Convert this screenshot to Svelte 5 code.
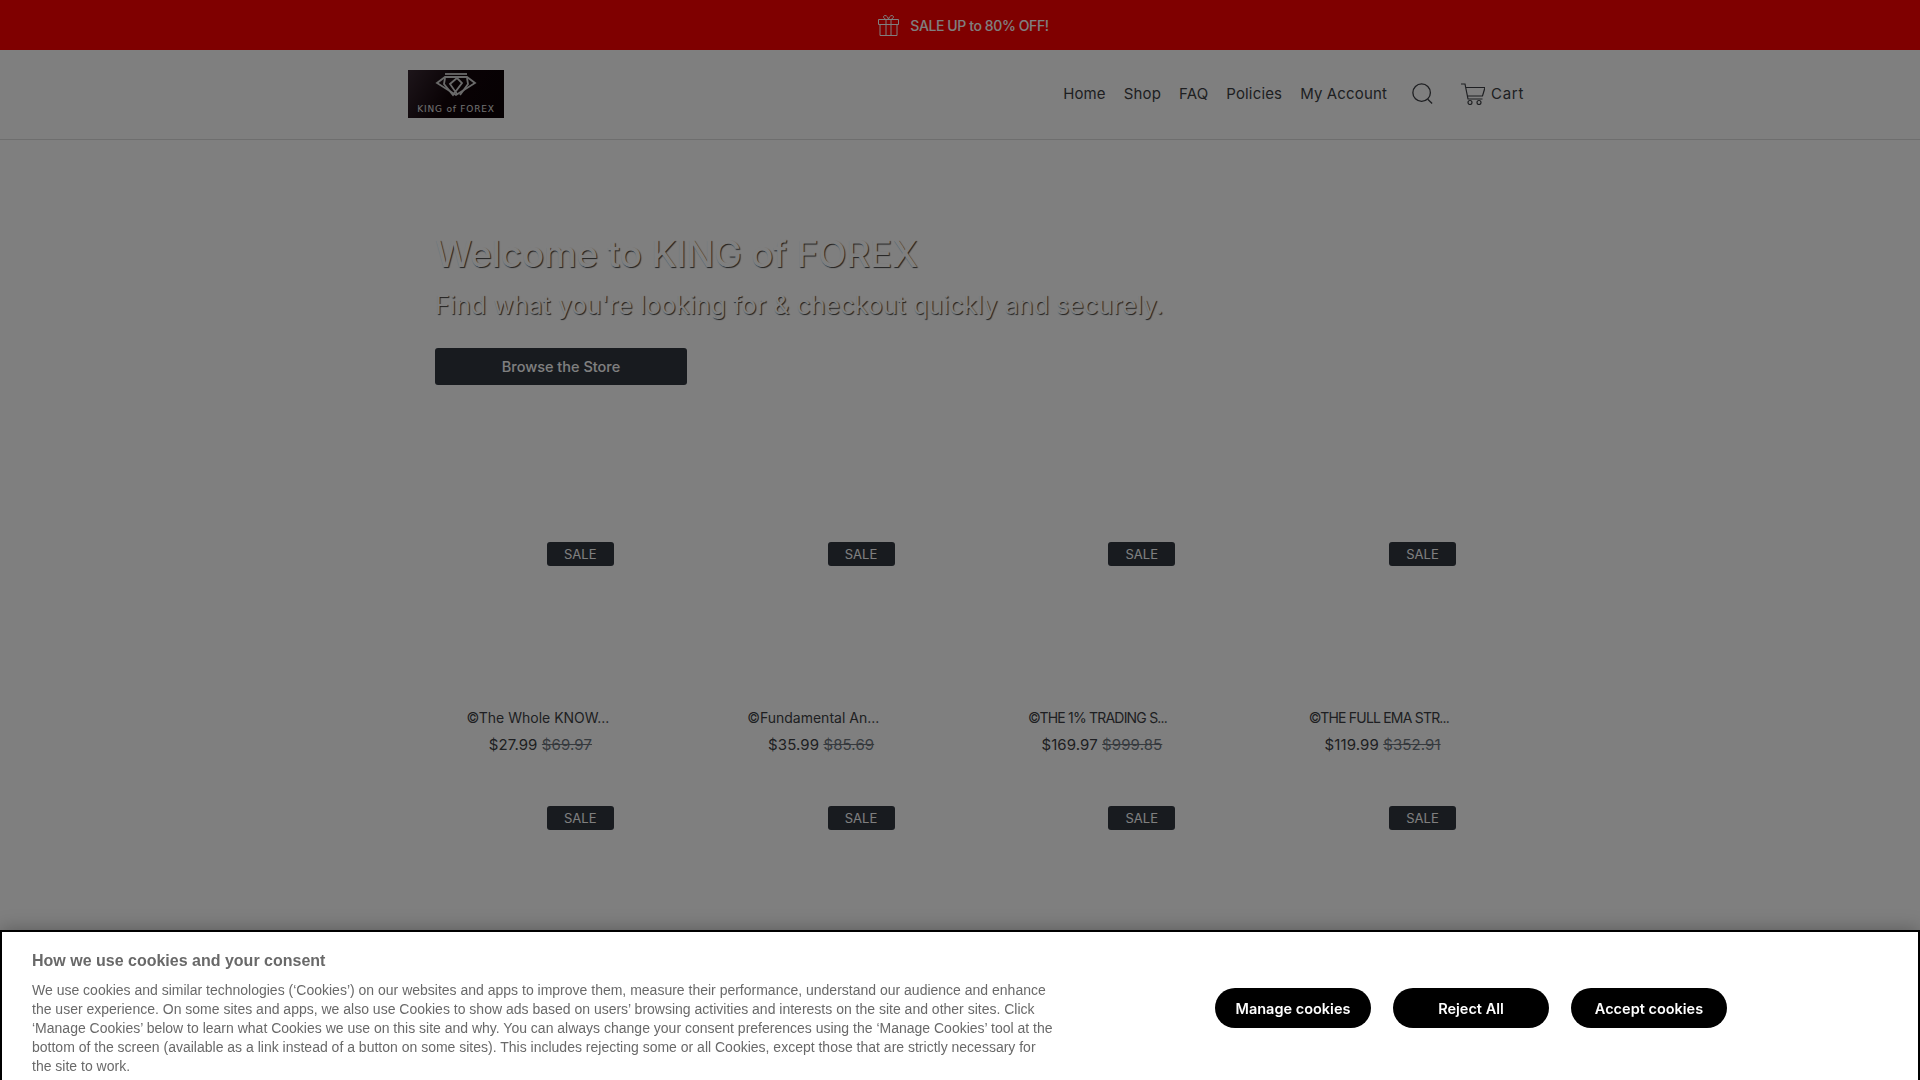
<script>
  const links = ['Home', 'Shop', 'FAQ', 'Policies', 'My Account'];
  const products = [
    { title: '©The Whole KNOW...', price: '$27.99', old: '$69.97' },
    { title: '©Fundamental An...', price: '$35.99', old: '$85.69' },
    { title: '©THE 1% TRADING S...', price: '$169.97', old: '$999.85', caps: true },
    { title: '©THE FULL EMA STR...', price: '$119.99', old: '$352.91', caps: true },
    {}, {}, {}, {}
  ];
</script>

<div class="page">
  <div class="topbar">
    <svg class="gift" viewBox="0 0 21 21" width="21" height="21" fill="none" stroke="currentColor" stroke-width="1">
      <path d="M.5 4.500h20v5H.5zM2 9.500v11h17v-11M8 4.500v16M13 4.500v16M8 4.500C5 3.500 5 .5 7 .5s3 2 3.500 4c.5-2 1.500-4 3.500-4s2 3-1 4" />
    </svg>
    <span>SALE UP to 80% OFF!</span>
  </div>

  <header>
    <div class="logo">
      <svg viewBox="0 0 96 48" width="96" height="48">
        <g fill="none" stroke="#d4d4d4" stroke-width="1.800">
          <path d="M37 4h22" />
          <path d="M37 8h22l8 6-19 12-19-12z" transform="translate(0 -1)" />
          <path d="M37 8l-1 6 9 11 9-12-5-5-7 6 7 10M59 8l1 6-8 11" />
        </g>
        <text x="48" y="41.500" text-anchor="middle">KING of FOREX</text>
      </svg>
    </div>
    <nav>
      {#each links as l}<span>{l}</span>{/each}
      <svg class="search" viewBox="0 0 24 24" width="21" height="21" fill="none" stroke="currentColor" stroke-width="1.500">
        <circle cx="11" cy="11" r="10" /><path d="M18 18.500l5 5" />
      </svg>
      <span class="cart">
        <svg viewBox="0 0 24 22" width="24" height="22" fill="none" stroke="currentColor" stroke-width="1.200">
          <path d="M0 1h4l3 15h14.500M4.800 4.500H24l-2.500 8.500H6.500" />
          <circle cx="9" cy="19.500" r="2" /><circle cx="18" cy="19.500" r="2" />
        </svg>
        <span class="cart-label">Cart</span>
      </span>
    </nav>
  </header>

  <section class="hero">
    <h1>Welcome to KING of FOREX</h1>
    <h2>Find what you're looking for &amp; checkout quickly and securely.</h2>
    <div class="browse">Browse the Store</div>
  </section>

  <section class="grid">
    {#each products as p}
      <article class="card">
        <div class="thumb"><span class="badge">SALE</span></div>
        {#if p.title}
          <div class="title" class:caps={p.caps}>{p.title}</div>
          <div class="price">{p.price} <s>{p.old}</s></div>
        {/if}
      </article>
    {/each}
  </section>

  <div class="overlay"></div>

  <aside class="cookie">
    <div class="copy">
      <h3>How we use cookies and your consent</h3>
      <p>We use cookies and similar technologies (‘Cookies’) on our websites and apps to improve them, measure their performance, understand our audience and enhance the user experience. On some sites and apps, we also use Cookies to show ads based on users’ browsing activities and interests on the site and other sites. Click ‘Manage Cookies’ below to learn what Cookies we use on this site and why. You can always change your consent preferences using the ‘Manage Cookies’ tool at the bottom of the screen (available as a link instead of a button on some sites). This includes rejecting some or all Cookies, except those that are strictly necessary for the site to work.</p>
    </div>
    <div class="actions">
      <button>Manage cookies</button>
      <button>Reject All</button>
      <button>Accept cookies</button>
    </div>
  </aside>
</div>

<style>
  :global(body) {
    margin: 0;
    background: #fff;
    overflow: hidden;
  }
  .page {
    height: 1080px;
    overflow: hidden;
    font-family: Inter, "Noto Sans", sans-serif;
    color: #3d3f44;
  }
  .overlay {
    position: fixed;
    inset: 0;
    background: rgba(0, 0, 0, 0.5);
  }
  .topbar {
    height: 50px;
    background: #ff0000;
    color: #fff;
    display: flex;
    align-items: center;
    justify-content: center;
    gap: 11px;
    font-size: 14px;
    font-weight: 500;
    letter-spacing: -0.4px;
    padding-left: 7px;
    box-sizing: border-box;
  }
  header {
    height: 90px;
    border-bottom: 1px solid #dcdcdc;
    box-sizing: border-box;
    display: flex;
    align-items: center;
    justify-content: space-between;
    padding: 0 396px 2px 408px;
  }
  .logo {
    width: 96px;
    height: 48px;
    background: linear-gradient(120deg, #3a2a34, #120409 45%, #0c0306);
  }
  .logo text {
    font-family: "DejaVu Sans", sans-serif;
    font-size: 9px;
    letter-spacing: 0.800px;
    fill: #e0e0e0;
  }
  nav {
    display: flex;
    align-items: center;
    gap: 18px;
    font-size: 15px;
    letter-spacing: 0.15px;
  }
  .search {
    margin: 0 10px 0 7px;
  }
  .cart {
    display: inline-flex;
    align-items: center;
    gap: 6px;
  }
  .cart-label {
    letter-spacing: 0.7px;
  }
  .hero {
    padding: 86px 0 0 435px;
  }
  h1 {
    margin: 0;
    font-size: 37px;
    line-height: 56px;
    font-weight: 500;
    letter-spacing: -0.25px;
    color: #fff;
    text-shadow: 1px 1px 1px rgba(0, 0, 0, 0.75);
  }
  h2 {
    margin: 4px 0 0;
    font-size: 25px;
    line-height: 38px;
    font-weight: 400;
    letter-spacing: 0.05px;
    color: #fff;
    text-shadow: 1px 1px 1px rgba(0, 0, 0, 0.75);
  }
  .browse {
    margin-top: 24px;
    width: 252px;
    height: 37px;
    border-radius: 3px;
    background: #30363f;
    color: #fff;
    font-size: 14.500px;
    font-weight: 500;
    display: flex;
    align-items: center;
    justify-content: center;
  }
  .grid {
    margin: 145px 0 0 400px;
    width: 1123px;
    display: grid;
    grid-template-columns: repeat(4, 1fr);
    grid-auto-rows: 264px;
  }
  .card {
    display: flex;
    flex-direction: column;
    align-items: center;
  }
  .thumb {
    width: 100%;
    height: 167px;
    position: relative;
  }
  .badge {
    position: absolute;
    top: 12px;
    right: 67px;
    width: 67px;
    height: 24px;
    border-radius: 3px;
    background: #30363f;
    color: #fff;
    font-size: 13px;
    display: flex;
    align-items: center;
    justify-content: center;
  }
  .title {
    width: 148px;
    margin-top: 10px;
    font-size: 14px;
    line-height: 22px;
    white-space: nowrap;
  }
  .title.caps {
    letter-spacing: -0.8px;
  }
  .price {
    margin-top: 5px;
    font-size: 15px;
    line-height: 22px;
    letter-spacing: 0.1px;
  }
  s {
    color: #6c757d;
  }
  .cookie {
    position: fixed;
    left: 0;
    right: 0;
    bottom: 0;
    height: 150px;
    box-sizing: border-box;
    border: 2px solid #000;
    border-bottom: 0;
    background: #fff;
    box-shadow: 0 0 18px rgba(0, 0, 0, 0.3);
    display: flex;
    font-family: "Liberation Sans", Arial, sans-serif;
    color: #696969;
  }
  .copy {
    width: 1024px;
    margin-left: 30px;
    padding-top: 19px;
  }
  h3 {
    margin: 0;
    font-size: 16px;
    line-height: 19px;
    font-weight: 700;
  }
  p {
    margin: 11px 0 0;
    font-size: 14px;
    line-height: 19px;
  }
  .actions {
    margin: 56px 0 0 159px;
    display: flex;
    gap: 22px;
    align-items: flex-start;
  }
  button {
    width: 156px;
    height: 40px;
    border: 0;
    border-radius: 20px;
    background: #000;
    color: #fff;
    font-family: Inter, sans-serif;
    font-size: 14.500px;
    font-weight: 600;
    padding: 0;
  }
</style>
